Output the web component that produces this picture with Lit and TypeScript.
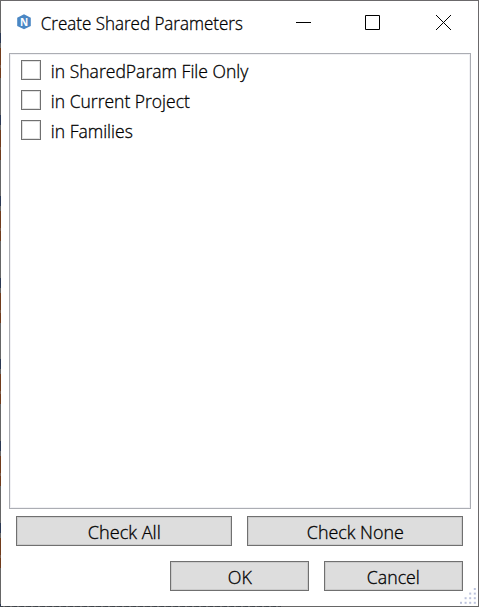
import { LitElement, html, svg, css } from "lit";
import { customElement } from "lit/decorators.js";

interface Label {
  text: string;
  width: number;
}

const options: Label[] = [
  { text: "in SharedParam File Only", width: 197.5 },
  { text: "in Current Project", width: 139 },
  { text: "in Families", width: 82 },
];

// Text fitted to a given advance width.
const fitted = (l: Label) => html`<svg class="label" width=${l.width} height="24">
  <text x="-0.2" y="18" textLength=${l.width} lengthAdjust="spacingAndGlyphs">${l.text}</text>
</svg>`;

const gripDot = (x: number, y: number) => svg`<rect x=${x} y=${y} width="2" height="2" />`;

@customElement("app-root")
export class AppRoot extends LitElement {
  static styles = css`
    :host {
      display: block;
      width: 479px;
      height: 607px;
      font: 300 17.6px "Open Sans", "Noto Sans", sans-serif;
      color: #000;
    }
    * {
      box-sizing: border-box;
    }
    .edge {
      height: 100%;
      padding: 1px;
      background:
        linear-gradient(#6b696b, #6b696b) 0 0 / 100% 1px no-repeat,
        linear-gradient(#6b696b, #6b696b) 100% 0 / 1px 100% no-repeat,
        repeating-linear-gradient(90deg, #3c4248 0 3px, #67686a 3px 5px, #494b4e 5px 7px) 0 100% / 281px 1px no-repeat,
        repeating-linear-gradient(#666 0 33px, #2b3853 33px 43px, #666 43px 48px, #703b1c 48px 65px, #7b5a48 65px 68px, #703b1c 68px 78px, #666 78px 81.6px) 0 0 / 1px 100% no-repeat,
        #666;
    }
    .window {
      position: relative;
      height: 100%;
      background: #fff;
      padding: 0 7px 15px 8px;
      display: flex;
      flex-direction: column;
    }
    svg {
      display: block;
      flex: none;
    }
    .label {
      overflow: visible;
      stroke: #000;
      stroke-width: 0.3px;
    }
    .titlebar {
      display: flex;
      height: 52px;
      flex: none;
      padding: 11px 19px 0 8px;
    }
    .titlebar .label {
      margin-left: 9px;
      margin-right: auto;
    }
    .logo {
      margin-top: 2px;
    }
    .logo text {
      font-weight: 700;
      font-size: 10px;
      fill: #fff;
    }
    .controls {
      display: flex;
      padding-top: 3px;
    }
    .maximize {
      margin: 0 55px 0 53px;
    }
    .list {
      flex: 1;
      border: 1px solid #abadb3;
      box-shadow: inset 0 0 0 1px #f1f1f4;
      padding: 6px 11px;
    }
    .option {
      display: flex;
      gap: 10px;
      height: 30px;
    }
    .box {
      width: 20px;
      height: 20px;
      border: 1px solid #707070;
      box-shadow: inset 0 0 0 1px #e2e2e2;
    }
    .actions {
      display: flex;
      flex: none;
      justify-content: flex-end;
      gap: 15px;
      padding: 7px 8px 0 7px;
    }
    .confirm {
      padding-top: 15px;
    }
    .button {
      height: 30px;
      padding: 4px 0 0;
      border: 1px solid #707070;
      background: #ddd;
      box-shadow: inset 0 0 0 1px #cbcbcb;
      display: flex;
      justify-content: center;
      align-items: flex-start;
      font: inherit;
      color: inherit;
    }
    .wide {
      width: 216px;
    }
    .narrow {
      width: 139px;
    }
    .grip {
      position: absolute;
      right: 2px;
      bottom: 2px;
    }
  `;

  render() {
    const dots = [3, 2, 1, 0].flatMap((row) =>
      [3, 2, 1, 0].filter((col) => row + col >= 3).map((col) => [col * 4.6, row * 4.6]),
    );
    return html`
      <div class="edge">
        <div class="window">
          <header class="titlebar">
            <svg class="logo" width="15" height="16" viewBox="0 0 15 16">
              <path d="M7 .3 13.8 3.7V11.9L7 15.3 .2 11.9V3.7Z" fill="#4a87c4" />
              <text x="2.9" y="11.5" textLength="8.2" lengthAdjust="spacingAndGlyphs">N</text>
            </svg>
            ${fitted({ text: "Create Shared Parameters", width: 202 })}
            <div class="controls">
              <svg width="16" height="16" stroke="#000"><path d="M0 7.5H15" /></svg>
              <svg class="maximize" width="16" height="16" stroke="#000" fill="none">
                <path d="M.5 .5H14.5V14.5H.5Z" />
              </svg>
              <svg width="16" height="16" stroke="#000"><path d="M0 0 15 15M15 0 0 15" /></svg>
            </div>
          </header>
          <main class="list">
            ${options.map(
              (o) => html`<div class="option"><span class="box"></span>${fitted(o)}</div>`,
            )}
          </main>
          <div class="actions">
            <button class="button wide">${fitted({ text: "Check All", width: 73 })}</button>
            <button class="button wide">${fitted({ text: "Check None", width: 97 })}</button>
          </div>
          <div class="actions confirm">
            <button class="button narrow">${fitted({ text: "OK", width: 24 })}</button>
            <button class="button narrow">${fitted({ text: "Cancel", width: 53 })}</button>
          </div>
          <svg class="grip" width="16" height="16" fill="#bcc3dc">
            ${dots.map(([x, y]) => gripDot(x, y))}
          </svg>
        </div>
      </div>
    `;
  }
}
